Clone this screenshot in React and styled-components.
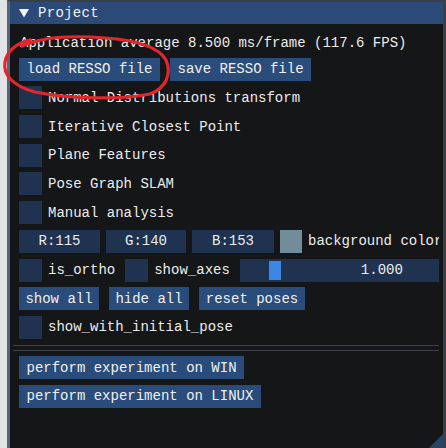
import React from 'react';
import styled, { createGlobalStyle } from 'styled-components';

const Global = createGlobalStyle`
  body {
    margin: 0;
    background: #e2e3e5;
    font-family: "Liberation Mono", "DejaVu Sans Mono", monospace;
    font-size: 14px;
    color: #ececec;
  }
`;

const Page = styled.div`
  position: relative;
  width: 446px;
  height: 448px;
  overflow: hidden;
`;

const Window = styled.div`
  margin-left: 7px;
  width: 433px;
  height: 446px;
  background: #151618;
  border-top: 2px solid #3a3f47;
  border-left: 3px solid #55657c;
  border-right: 3px solid #3b3f46;
  display: flex;
  flex-direction: column;
  overflow: hidden;
  position: relative;
`;

const TitleBar = styled.div`
  height: 22px;
  flex: none;
  background: #2b4a78;
  display: flex;
  align-items: center;
  gap: 9px;
  padding-left: 9px;
  color: #f2f2f2;
  letter-spacing: 0.3px;
`;

const Arrow = styled.svg`
  width: 10px;
  height: 10px;
`;

const Content = styled.div`
  width: 420px;
  padding: 11px 0 0 9px;
  display: flex;
  flex-direction: column;
  gap: 5.7px;
  white-space: nowrap;
  overflow: hidden;
`;

const Line = styled.div`
  height: 17px;
  line-height: 17px;
  padding-left: 1px;
`;

const Row = styled.div`
  display: flex;
  align-items: center;
  height: 23px;
  gap: ${({ $gap }) => $gap ?? 10}px;
`;

const Button = styled.div`
  height: 23px;
  flex: none;
  display: flex;
  align-items: center;
  justify-content: center;
  padding: 0 7.5px;
  width: ${({ $w }) => ($w ? `${$w}px` : 'auto')};
  box-sizing: border-box;
  background: #2a4c7a;
  color: #f0f0f0;
`;

const Check = styled.label`
  display: flex;
  align-items: center;
  gap: 6px;
  flex: none;
`;

const Box = styled.span`
  width: 23px;
  height: 23px;
  background: #1f3350;
  flex: none;
`;

const Field = styled.div`
  width: ${({ $w }) => $w}px;
  height: 23px;
  flex: none;
  background: #1f3350;
  display: flex;
  align-items: center;
  justify-content: center;
`;

const Swatch = styled.span`
  width: 22px;
  height: 23px;
  flex: none;
  background: rgb(115, 140, 153);
`;

const Slider = styled.div`
  position: relative;
  width: 284px;
  height: 23px;
  flex: none;
  background: #1f3350;
  display: flex;
  align-items: center;
  justify-content: center;
`;

const Grab = styled.span`
  position: absolute;
  left: 29px;
  top: 2px;
  width: 12px;
  height: 19px;
  background: #3d86e3;
`;

const Separator = styled.div`
  margin: 0 0 0 -6px;
  width: 430px;
  height: 4px;
  border-top: 1px solid #3e4147;
  border-bottom: 1px solid #3e4147;
`;

const Grip = styled.svg`
  position: absolute;
  right: 0;
  bottom: 0;
  width: 14px;
  height: 14px;
`;

const Mark = styled.svg`
  position: absolute;
  top: 0;
  left: 0;
  pointer-events: none;
`;

const Checkbox = ({ label }) => (
  <Check>
    <Box />
    {label && <span>{label}</span>}
  </Check>
);

const App = () => (
  <Page>
    <Global />
    <Window>
      <TitleBar>
        <Arrow viewBox="0 0 10 10">
          <path d="M0 1 H10 L5 9.5 Z" fill="#f2f2f2" />
        </Arrow>
        <span>Project</span>
      </TitleBar>
      <Content>
        <Line>Application average 8.500 ms/frame (117.6 FPS)</Line>
        <Row>
          <Button>load RESSO file</Button>
          <Button>save RESSO file</Button>
        </Row>
        <Row><Checkbox label="Normal Distributions transform" /></Row>
        <Row><Checkbox label="Iterative Closest Point" /></Row>
        <Row><Checkbox label="Plane Features" /></Row>
        <Row><Checkbox label="Pose Graph SLAM" /></Row>
        <Row><Checkbox label="Manual analysis" /></Row>
        <Row $gap={6}>
          <Field $w={81}>R:115</Field>
          <Field $w={80}>G:140</Field>
          <Field $w={82}>B:153</Field>
          <Swatch />
          <span>background color</span>
        </Row>
        <Row>
          <Checkbox label="is_ortho" />
          <Checkbox label="show_axes" />
          <Slider>
            <Grab />
            <span>1.000</span>
          </Slider>
        </Row>
        <Row>
          <Button $w={80}>show all</Button>
          <Button $w={80}>hide all</Button>
          <Button $w={106}>reset poses</Button>
        </Row>
        <Row><Checkbox label="show_with_initial_pose" /></Row>
        <Separator />
        <Row><Button>perform experiment on WIN</Button></Row>
        <Row><Button>perform experiment on LINUX</Button></Row>
      </Content>
      <Grip viewBox="0 0 14 14">
        <path d="M14 0 V14 H0 Z" fill="#294566" />
      </Grip>
    </Window>
    <Mark width="446" height="448" viewBox="0 0 446 448">
      <path
        d="M22 46 C40 38 70 35 105 38 C135 40 158 46 166 60 C172 74 166 88 150 94 C120 100 70 99 35 92 C12 86 3 74 5 62 C7 52 14 44 30 40"
        fill="none"
        stroke="#e3262b"
        strokeWidth="3.2"
        strokeLinecap="round"
      />
    </Mark>
  </Page>
);

export default App;
